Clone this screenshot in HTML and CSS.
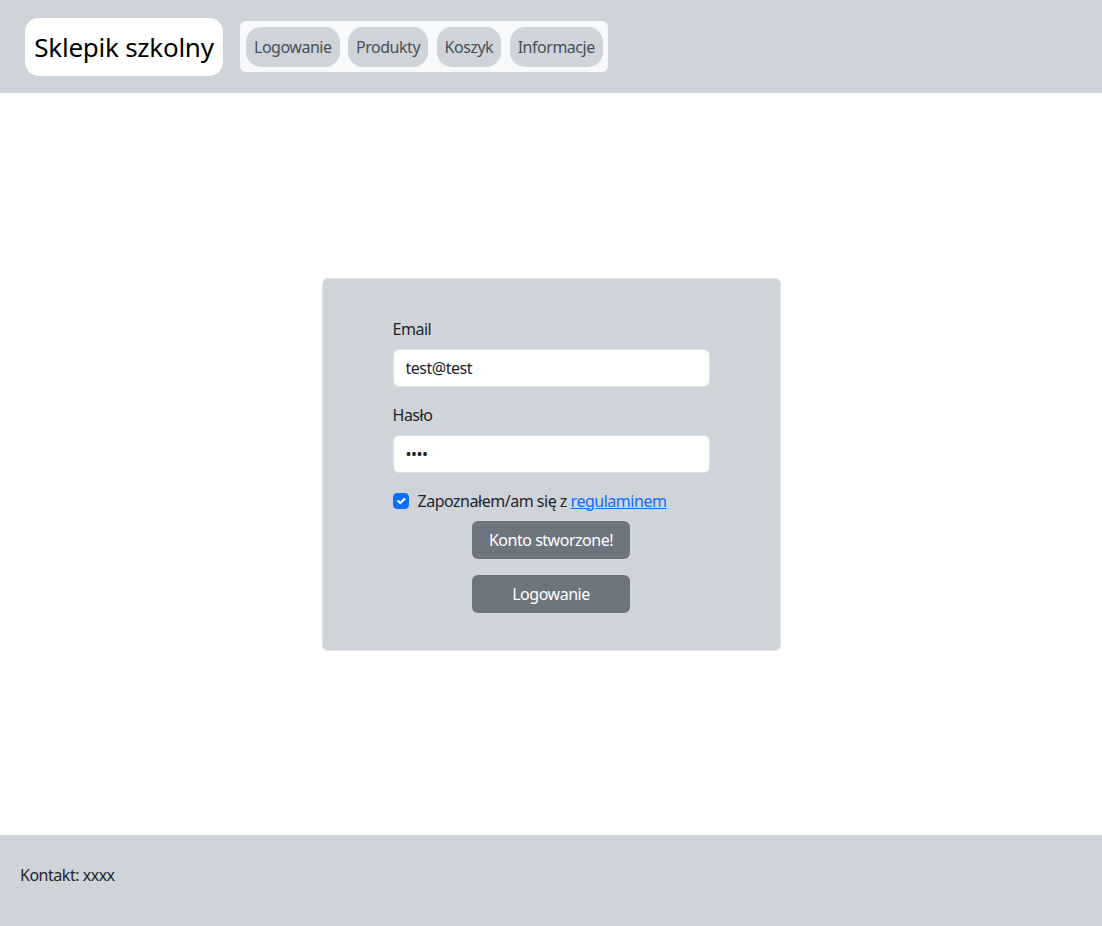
FILE: index.html
```html
<!DOCTYPE html>
<html lang="pl">
<head>
<meta charset="utf-8">
<title>Sklepik szkolny</title>
<link rel="stylesheet" href="styles.css">
</head>
<body>
<div class="page">
  <header class="topbar">
    <div class="brand">Sklepik szkolny</div>
    <nav class="nav">
      <a class="pill" href="#">Logowanie</a>
      <a class="pill" href="#">Produkty</a>
      <a class="pill" href="#">Koszyk</a>
      <a class="pill" href="#">Informacje</a>
    </nav>
  </header>
  <main class="main">
    <form class="card">
      <div class="field">
        <label class="label" for="email">Email</label>
        <input class="input" id="email" type="email" value="test@test">
      </div>
      <div class="field">
        <label class="label" for="pass">Hasło</label>
        <input class="input" id="pass" type="password" value="test">
      </div>
      <div class="check">
        <input class="checkbox" type="checkbox" id="agree" checked>
        <label for="agree">Zapoznałem/am się z <a href="#" class="link">regulaminem</a></label>
      </div>
      <div class="actions">
        <button type="button" class="btn">Konto stworzone!</button>
        <button type="button" class="btn">Logowanie</button>
      </div>
    </form>
  </main>
  <footer class="footer">Kontakt: xxxx</footer>
</div>
</body>
</html>
```
FILE: styles.css
```css
* { box-sizing: border-box; }
html, body { margin: 0; height: 100%; }
body {
  font-family: "Noto Sans", "Open Sans", sans-serif;
  font-size: 16px;
  line-height: 24px;
  letter-spacing: -0.03em;
  color: #212529;
  background: #fff;
}
.page {
  min-height: 100%;
  display: flex;
  flex-direction: column;
}
.topbar {
  background: #ced4da;
  height: 93px;
  display: flex;
  align-items: center;
  padding: 0 25px;
  gap: 17px;
}
.brand {
  background: #fff;
  border-radius: 14px;
  height: 58px;
  width: 198px;
  display: flex;
  align-items: center;
  justify-content: center;
  font-size: 26px;
  letter-spacing: -0.01em;
  color: #000;
  white-space: nowrap;
}
.nav {
  background: #f8f9fa;
  border-radius: 6px;
  padding: 6px 5px 5px 6px;
  display: flex;
  gap: 8.5px;
}
.pill {
  display: block;
  background: #ced4da;
  border-radius: 15px;
  padding: 8px 8px;
  color: #495057;
  text-decoration: none;
  white-space: nowrap;
}
.main {
  flex: 1;
  display: flex;
  align-items: center;
  justify-content: center;
}
.card {
  width: 459px;
  background: #ced4da;
  border: 1px solid #dee2e6;
  border-radius: 6px;
  padding: 38px 70px 37px;
}
.field { margin-bottom: 16px; }
.label { display: block; margin-bottom: 8px; }
.input {
  display: block;
  width: 100%;
  height: 38px;
  padding: 6px 12px;
  font: inherit;
  letter-spacing: inherit;
  color: #212529;
  background: #fff;
  border: 1px solid #dee2e6;
  border-radius: 6px;
}
.check {
  display: flex;
  align-items: center;
  gap: 9px;
  margin-bottom: 8px;
}
.checkbox {
  appearance: none;
  width: 16px;
  height: 16px;
  margin: 0;
  border-radius: 4px;
  background: #0d6efd url("data:image/svg+xml,%3csvg xmlns='http://www.w3.org/2000/svg' viewBox='0 0 20 20'%3e%3cpath fill='none' stroke='%23fff' stroke-linecap='round' stroke-linejoin='round' stroke-width='3' d='m6 10 3 3 6-6'/%3e%3c/svg%3e") center/100% no-repeat;
  border: 1px solid #0d6efd;
}
.link { color: #0d6efd; }
.actions {
  display: flex;
  flex-direction: column;
  align-items: center;
  gap: 16px;
}
.btn {
  width: 158px;
  height: 38px;
  font: inherit;
  letter-spacing: inherit;
  color: #fff;
  background: #6c757d;
  border: 0;
  border-radius: 6px;
}
.footer {
  background: #ced4da;
  height: 91px;
  padding: 28px 20px 0;
}
```
